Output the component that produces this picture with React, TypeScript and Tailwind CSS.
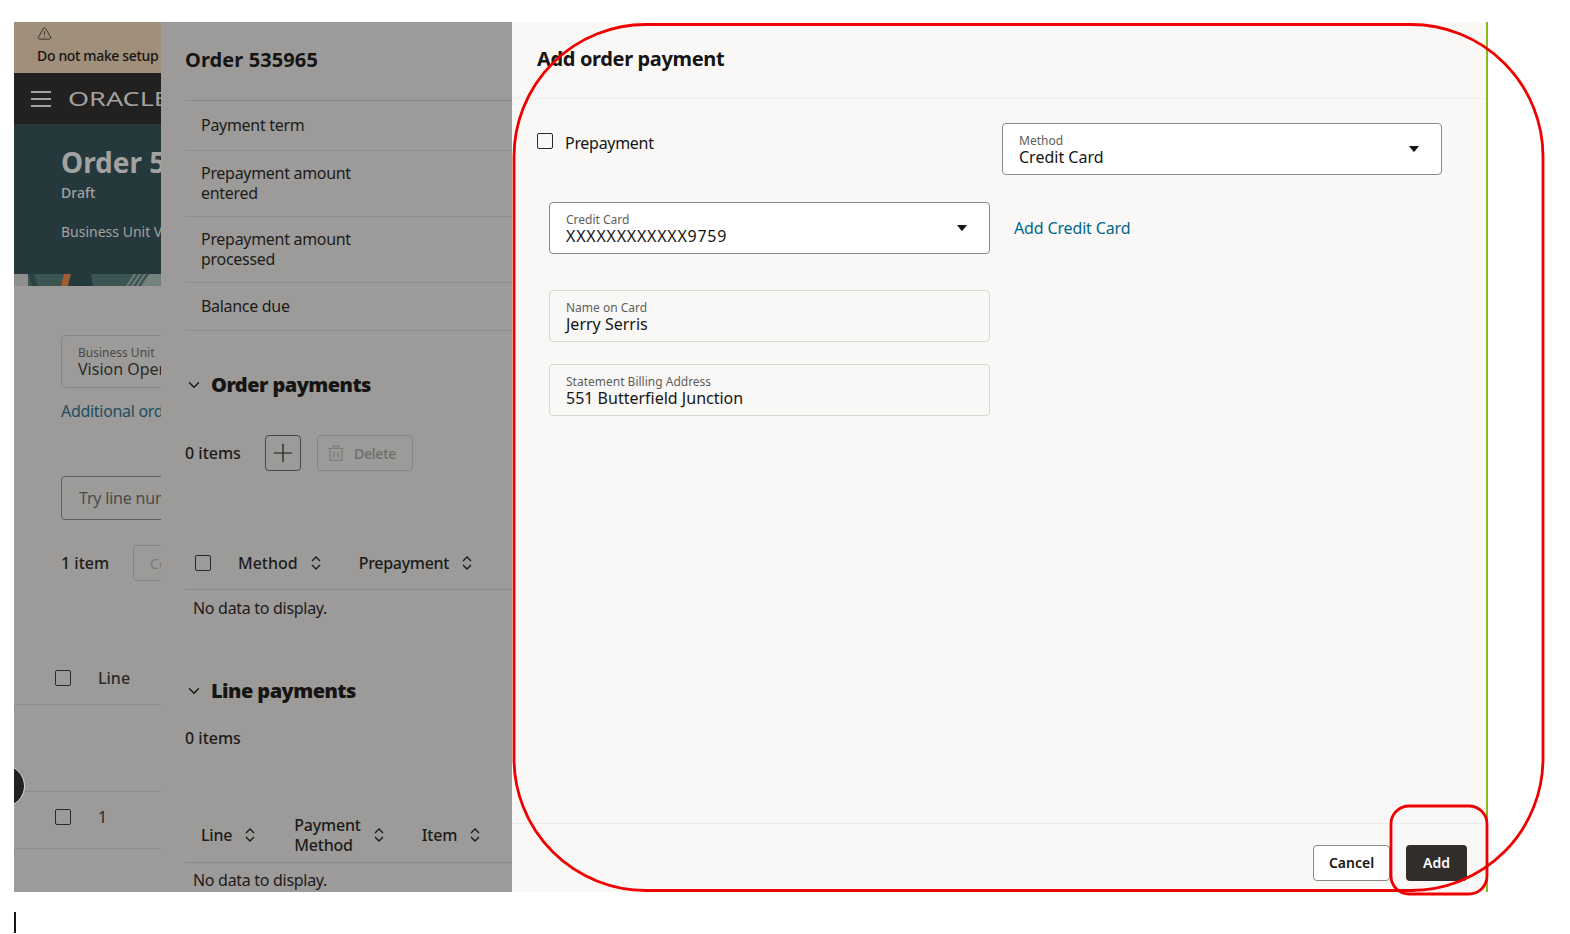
import { ChevronDown, Plus, TriangleAlert } from "lucide-react";

const font = "font-['Noto_Sans',sans-serif]";

function SortIcon({ className = "" }: { className?: string }) {
  return (
    <svg width="12" height="16" viewBox="0 0 12 16" fill="none" stroke="currentColor" strokeWidth="1.4" className={className}>
      <path d="M2 6l4-4 4 4" />
      <path d="M2 10l4 4 4-4" />
    </svg>
  );
}

function Checkbox({ className = "" }: { className?: string }) {
  return <span className={`block h-4 w-4 shrink-0 rounded-[2px] border border-[#2a2927] ${className}`} />;
}

function Caret() {
  return (
    <svg width="10" height="6" viewBox="0 0 10 6" className="fill-[#161513]">
      <path d="M0 0h10L5.6 5.4a.8.8 0 0 1-1.2 0z" />
    </svg>
  );
}

function TrashIcon() {
  return (
    <svg width="18" height="18" viewBox="0 0 18 18" fill="none" stroke="#7c7b78" strokeWidth="1.2">
      <path d="M1.5 4.5h15M3 4.5v12h12v-12M6.5 4.5V2h5v2.500M7 7.500v6M11 7.500v6" />
    </svg>
  );
}

function Field({
  label,
  value,
  select,
  readOnly,
  wide,
  className = "",
}: {
  label: string;
  value: string;
  select?: boolean;
  readOnly?: boolean;
  wide?: boolean;
  className?: string;
}) {
  return (
    <div
      className={`flex h-[52px] items-center justify-between rounded-[4px] border pl-4 pr-[22px] ${
        readOnly ? "border-[#d9d7d4]" : "border-[#8b8986] bg-white"
      } ${className}`}
    >
      <div className="flex flex-col">
        <span className="text-[12px] leading-[15px] text-[#5f5e5b]">{label}</span>
        <span className={`text-[16px] leading-[18px] text-[#161513] ${wide ? "tracking-[0.75px]" : ""}`}>{value}</span>
      </div>
      {select && <Caret />}
    </div>
  );
}

function InfoRow({ lines, className }: { lines: string[]; className: string }) {
  return (
    <div className={`flex flex-col justify-center border-b border-[#8f8e8c] pb-[2px] pl-4 text-[16px] leading-5 tracking-[-0.3px] text-[#1c1b19] ${className}`}>
      {lines.map((l) => (
        <span key={l}>{l}</span>
      ))}
    </div>
  );
}

function SectionTitle({ title, className = "" }: { title: string; className?: string }) {
  return (
    <div className={`flex items-center gap-[8px] ${className}`}>
      <ChevronDown size={18} strokeWidth={1.8} className="text-[#161513]" />
      <h2 className="text-[20px] font-black leading-6 tracking-[-0.55px] text-[#161513]">{title}</h2>
    </div>
  );
}

function BasePage() {
  return (
    <div className="relative w-[147px] shrink-0 overflow-hidden bg-[#9c9b99]">
      <div className="h-[51px] whitespace-nowrap bg-[#a08f7a] pl-[23px] pt-1 text-[14px] font-medium leading-[18px] tracking-[-0.35px] text-[#161513]">
        <TriangleAlert size={15} strokeWidth={1.2} className="mb-[6px]" />
        Do not make setup
      </div>
      <div className="flex h-[51px] items-center gap-[17px] bg-[#232120] pl-[17px]">
        <div className="flex w-5 flex-col gap-[5px]">
          <span className="h-[2px] bg-[#a3a2a0]" />
          <span className="h-[2px] bg-[#a3a2a0]" />
          <span className="h-[2px] bg-[#a3a2a0]" />
        </div>
        <span className="origin-left scale-x-[1.35] whitespace-nowrap text-[20px] text-[#a3a2a0]">ORACLE</span>
      </div>
      <div className="h-[150px] whitespace-nowrap bg-[#25383c] pl-[47px] pt-[20px] text-[#a3a2a0]">
        <div className="text-[28px] font-bold leading-9">Order 535965</div>
        <div className="mt-[3px] text-[14px] font-medium leading-5">Draft</div>
        <div className="mt-[19px] text-[14px] leading-5">Business Unit Vision</div>
      </div>
      <svg width="147" height="12" viewBox="0 0 147 12" className="block">
        <rect width="147" height="12" fill="#3b5553" />
        <rect width="14" height="12" fill="#8d8f8c" />
        <path d="M14 0h6l4 12h-6z" fill="#2c4245" />
        <path d="M50 0h7l-3 12h-7z" fill="#a05c30" />
        <path d="M57 0h20l2 12H54z" fill="#25383c" />
        <path d="M112 12l8-12h2l-8 12zM117 12l8-12h2l-8 12zM122 12l8-12h2l-8 12zM127 12l8-12h12v12z" fill="#75817e" />
      </svg>
      <div className="pl-[47px]">
        <div className="mt-[49px] flex h-[53px] w-[200px] flex-col justify-center whitespace-nowrap rounded-[4px] border border-[#878684] pl-4 text-[#2b2a28]">
          <span className="text-[12px] leading-[15px] text-[#4a4947]">Business Unit</span>
          <span className="text-[16px] leading-[18px]">Vision Operations</span>
        </div>
        <div className="mt-[13px] whitespace-nowrap text-[16px] leading-5 tracking-[-0.3px] text-[#1f4d5c]">Additional order information</div>
        <div className="mt-[55px] flex h-[44px] w-[300px] items-center rounded-[4px] border border-[#5f5e5c] pl-[17px] text-[16px] tracking-[-0.2px] text-[#4c4b49]">Try line number</div>
        <div className="mt-[25px] flex items-center">
          <span className="whitespace-nowrap text-[16px] font-medium text-[#1c1b19]">1 item</span>
          <span className="ml-[24px] flex h-9 w-[80px] shrink-0 items-center rounded-[4px] border border-[#878684] pl-4 text-[14px] text-[#7c7b78]">Copy</span>
        </div>
      </div>
      <div className="mt-[84px] flex h-[40px] items-center border-b border-[#8f8e8c] pb-[13px] pl-[41px] text-[16px] font-medium text-[#2b2a28]">
        <Checkbox />
        <span className="ml-[27px]">Line</span>
      </div>
      <div className="h-[87px] border-b border-[#8f8e8c]" />
      <div className="flex h-[57px] items-center border-b border-[#8f8e8c] pb-[7px] pl-[41px] text-[16px] text-[#2b2a28]">
        <Checkbox />
        <span className="ml-[27px]">1</span>
      </div>
      <div className="absolute left-[-31px] top-[743px] h-[42px] w-[42px] rounded-full border border-[#d8d7d5] bg-[#232120]" />
    </div>
  );
}

function OrderDrawer() {
  return (
    <div className="h-full w-[351px] shrink-0 overflow-hidden bg-[#9c9b99] pl-6 text-[#1c1b19]">
      <h1 className="flex h-[79px] items-center border-b border-[#8a8987] pb-[3px] text-[20px] font-bold leading-6 tracking-[0.1px] text-[#161513]">Order 535965</h1>
      <InfoRow lines={["Payment term"]} className="h-[50px]" />
      <InfoRow lines={["Prepayment amount", "entered"]} className="h-[66px]" />
      <InfoRow lines={["Prepayment amount", "processed"]} className="h-[66px]" />
      <InfoRow lines={["Balance due"]} className="h-[48px]" />
      <SectionTitle title="Order payments" className="mt-[42px]" />
      <div className="mt-[38px] flex items-center">
        <span className="text-[16px] font-medium">0 items</span>
        <span className="ml-6 flex h-9 w-9 items-center justify-center rounded-[4px] border border-[#4a4947]">
          <Plus size={30} strokeWidth={0.95} />
        </span>
        <span className="ml-[16px] flex h-9 w-[96px] items-center gap-[9px] rounded-[4px] border border-[#878684] pl-[9px] text-[14px] font-medium tracking-[-0.2px] text-[#6e6d6a]">
          <TrashIcon />
          Delete
        </span>
      </div>
      <div className="mt-[79px] flex h-[40px] items-center border-b border-[#8a8987] pb-[14px] pl-[10px] text-[16px] font-medium">
        <Checkbox />
        <span className="ml-[27px]">Method</span>
        <SortIcon className="ml-3" />
        <span className="ml-[37px] tracking-[-0.3px]">Prepayment</span>
        <SortIcon className="ml-3" />
      </div>
      <div className="pl-2 pt-[8px] text-[16px] leading-5 tracking-[-0.3px]">No data to display.</div>
      <SectionTitle title="Line payments" className="mt-[61px]" />
      <div className="mt-[25px] text-[16px] font-medium leading-5">0 items</div>
      <div className="mt-[61px] flex h-[54px] items-center border-b border-[#8a8987] pb-[2px] pl-4 text-[16px] font-medium leading-5 tracking-[-0.2px]">
        <span>Line</span>
        <SortIcon className="ml-3" />
        <span className="ml-[38px]">
          Payment
          <br />
          Method
        </span>
        <SortIcon className="ml-3" />
        <span className="ml-[37px]">Item</span>
        <SortIcon className="ml-3" />
      </div>
      <div className="pl-2 pt-[7px] text-[16px] leading-5 tracking-[-0.3px]">No data to display.</div>
    </div>
  );
}

function PaymentDrawer() {
  return (
    <div className="flex h-full flex-1 flex-col border-r-2 border-[#8cb81c] bg-[#f9f8f6]">
      <div className="flex h-[77px] shrink-0 items-center border-b border-[#f1efed] pb-[2px] pl-[25px]">
        <h1 className="text-[20px] font-bold leading-6 tracking-[-0.35px] text-[#161513]">Add order payment</h1>
      </div>
      <div className="flex-1 pl-[25px] pr-[44px] pt-[24px]">
        <div className="flex items-start justify-between">
          <label className="flex items-center pt-[10px] text-[16px] leading-5 tracking-[-0.3px] text-[#161513]">
            <Checkbox className="mb-1" />
            <span className="ml-3">Prepayment</span>
          </label>
          <Field label="Method" value="Credit Card" select className="w-[440px]" />
        </div>
        <div className="ml-3 mt-[27px] flex items-center">
          <Field label="Credit Card" value="XXXXXXXXXXXX9759" select wide className="w-[441px]" />
          <a className="ml-6 text-[16px] leading-5 tracking-[-0.15px] text-[#00688c]">Add Credit Card</a>
        </div>
        <Field label="Name on Card" value="Jerry Serris" readOnly className="ml-3 mt-[36px] w-[441px]" />
        <Field label="Statement Billing Address" value="551 Butterfield Junction" readOnly className="ml-3 mt-[22px] w-[441px]" />
      </div>
      <div className="flex h-[69px] shrink-0 items-start justify-end gap-4 border-t border-[#ecebe9] pr-[19px] pt-[21px] text-[14px] font-semibold">
        <button className="h-9 w-[77px] rounded-[4px] border border-[#8b8986] bg-white pb-[2px] text-[#161513]">Cancel</button>
        <button className="h-9 w-[61px] rounded-[4px] bg-[#312d2a] pb-[2px] text-white">Add</button>
      </div>
    </div>
  );
}

export default function App() {
  return (
    <div className={`relative h-[934px] w-[1570px] overflow-hidden bg-white pl-[14px] pt-[22px] ${font}`}>
      <div className="flex h-[870px] w-[1474px]">
        <BasePage />
        <OrderDrawer />
        <PaymentDrawer />
      </div>
      <div className="absolute left-[14px] top-[912px] h-[21px] w-[2px] bg-[#161513]" />
      <svg width="1570" height="934" fill="none" stroke="#ee0000" strokeWidth="2.800" className="pointer-events-none absolute left-0 top-0">
        <rect x="514" y="24.500" width="1029" height="866" rx="132" ry="132" />
        <rect x="1391" y="806" width="96" height="88" rx="18" ry="18" />
      </svg>
    </div>
  );
}
